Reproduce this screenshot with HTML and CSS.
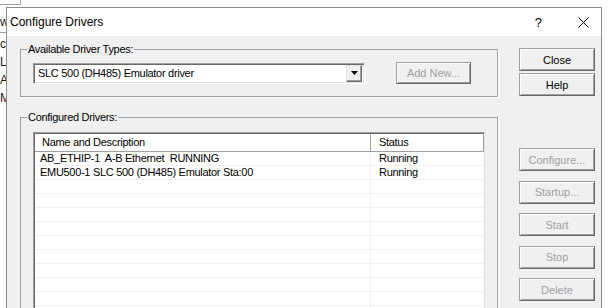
FILE: index.html
```html
<!DOCTYPE html>
<html lang="en">
<head>
  <meta charset="UTF-8">
  <title>Configure Drivers</title>
  <link rel="stylesheet" href="styles.css">
</head>
<body>

<div class="top">
  <div class="tab"></div>
</div>

<div class="screen">
  <div class="strip">
    <span class="s1">w:</span>
    <div class="rule"></div>
    <span>cs</span>
    <span>Li</span>
    <span>AE</span>
    <span>M</span>
  </div>

  <div class="dialog">
    <div class="titlebar">
      <span class="title">Configure Drivers</span>
      <span class="qmark">?</span>
      <svg class="xbtn" width="11" height="11" viewBox="0 0 11 11">
        <path d="M0.5 0.5 L10.5 10.5 M10.5 0.5 L0.5 10.5" stroke="#000" stroke-width="1" fill="none"/>
      </svg>
    </div>

    <div class="content">
      <div class="main">
        <fieldset class="group groupTypes">
          <legend>Available Driver Types:</legend>
          <div class="pick">
            <div class="combo">
              <span class="comboText">SLC 500 (DH485) Emulator driver</span>
              <div class="drop">
                <svg width="7" height="4" viewBox="0 0 7 4"><polygon points="0,0 7,0 3.5,4" fill="#000"/></svg>
              </div>
            </div>
            <div class="btn off addNew">Add New...</div>
          </div>
        </fieldset>

        <fieldset class="group groupConf">
          <legend>Configured Drivers:</legend>
          <div class="list">
            <div class="view">
              <div class="head">
                <div class="c1">Name and Description</div>
                <div class="c2">Status</div>
              </div>
              <div class="item"><div class="c1">AB_ETHIP-1  A-B Ethernet  RUNNING</div><div class="c2">Running</div></div>
              <div class="item"><div class="c1">EMU500-1 SLC 500 (DH485) Emulator Sta:00</div><div class="c2">Running</div></div>
              <div class="item"><div class="c1"></div><div class="c2"></div></div>
              <div class="item"><div class="c1"></div><div class="c2"></div></div>
              <div class="item"><div class="c1"></div><div class="c2"></div></div>
              <div class="item"><div class="c1"></div><div class="c2"></div></div>
              <div class="item"><div class="c1"></div><div class="c2"></div></div>
              <div class="item"><div class="c1"></div><div class="c2"></div></div>
              <div class="item"><div class="c1"></div><div class="c2"></div></div>
              <div class="item"><div class="c1"></div><div class="c2"></div></div>
              <div class="item"><div class="c1"></div><div class="c2"></div></div>
              <div class="item"><div class="c1"></div><div class="c2"></div></div>
            </div>
          </div>
        </fieldset>
      </div>

      <div class="side">
        <div class="btn">Close</div>
        <div class="btn help">Help</div>
        <div class="btn off configure">Configure...</div>
        <div class="btn off gapped">Startup...</div>
        <div class="btn off gapped">Start</div>
        <div class="btn off gapped">Stop</div>
        <div class="btn off gapped">Delete</div>
      </div>
    </div>
  </div>
</div>

</body>
</html>
```

FILE: styles.css
```css
* {
  margin: 0;
  padding: 0;
  box-sizing: border-box;
}

body {
  width: 609px;
  height: 308px;
  overflow: hidden;
  background: #fff;
  font-family: "Liberation Sans", Arial, sans-serif;
  font-size: 11px;
  letter-spacing: -0.3px;
  color: #000;
}

/* window behind the dialog */
.top {
  height: 7px;
}

.tab {
  width: 21px;
  height: 5px;
  border-right: 1px solid #a0a0a0;
  border-bottom: 1px solid #a0a0a0;
}

.screen {
  display: flex;
  height: 301px;
}

.strip {
  width: 6px;
  flex: none;
  overflow: hidden;
  padding-top: 6px;
  font-size: 12px;
  letter-spacing: 0;
  color: #1a1a1a;
}

.strip span {
  display: block;
  height: 18px;
  line-height: 18px;
  white-space: nowrap;
}

.strip .rule {
  height: 1px;
  margin: 1px 0 2px;
  background: #a0a0a0;
}

/* dialog */
.dialog {
  width: 596px;
  flex: none;
  display: flex;
  flex-direction: column;
  border: 1px solid #8c8c8c;
  border-bottom: 0;
  background: #f0f0f0;
}

.titlebar {
  height: 28px;
  flex: none;
  display: flex;
  align-items: center;
  padding: 0 12px 0 3px;
  background: #fff;
  font-size: 12px;
  letter-spacing: 0;
}

.title {
  flex: 1;
}

.qmark {
  font-size: 13px;
  margin-right: 36px;
}

.content {
  flex: 1;
  display: flex;
  gap: 21px;
  padding: 7px 0 0 13px;
  overflow: hidden;
}

.main {
  width: 478px;
  flex: none;
}

/* group boxes */
.group {
  border: 1px solid #a0a0a0;
  box-shadow: 1px 1px 0 #fff;
  min-width: 0;
}

.group legend {
  margin-left: -6px;
  padding: 0 1px;
  line-height: 13px;
}

.groupTypes {
  padding: 6px 12px 12px 12px;
}

.groupConf {
  margin-top: 14px;
  padding: 8px 12px 0 12px;
}

.pick {
  display: flex;
  align-items: center;
  gap: 31px;
  height: 22px;
}

.combo {
  width: 332px;
  height: 21px;
  display: flex;
  align-items: center;
  padding: 1px 2px 1px 4px;
  background: #fff;
  border: 1px solid;
  border-color: #a0a0a0 #fff #fff #a0a0a0;
  box-shadow: inset 1px 1px #696969, inset -1px -1px #e3e3e3;
}

.comboText {
  flex: 1;
}

.drop {
  width: 16px;
  height: 17px;
  display: flex;
  align-items: center;
  justify-content: center;
  background: #f0f0f0;
  border: 1px solid;
  border-color: #e3e3e3 #696969 #696969 #e3e3e3;
  box-shadow: inset -1px -1px #a0a0a0;
}

/* buttons */
.btn {
  width: 76px;
  height: 23px;
  display: flex;
  align-items: center;
  justify-content: center;
  background: #f0f0f0;
  border: 1px solid;
  border-color: #a0a0a0 #696969 #696969 #a0a0a0;
  box-shadow: inset 1px 1px #fff, inset -1px -1px #a0a0a0;
  letter-spacing: 0;
}

.btn.off {
  color: #a0a0a0;
}

.addNew {
  width: 75px;
  height: 22px;
}

.side {
  width: 76px;
  flex: none;
  display: flex;
  flex-direction: column;
  padding-top: 5px;
}

.help {
  margin-top: 2px;
}

.configure {
  margin-top: 52px;
}

.gapped {
  margin-top: 9.5px;
}

/* list view */
.list {
  height: 200px;
  background: #fff;
  border: 1px solid;
  border-color: #a0a0a0 #e3e3e3 #e3e3e3 #a0a0a0;
}

.view {
  height: 100%;
  border-top: 1px solid #696969;
  border-left: 1px solid #696969;
}

.head,
.item {
  display: flex;
}

.head {
  height: 18px;
  line-height: 17px;
  border-bottom: 1px solid #a0a0a0;
}

.head .c1 {
  width: 336px;
  padding-left: 7px;
  border-right: 1px solid #a0a0a0;
}

.head .c2 {
  flex: 1;
  padding-left: 8px;
  border-right: 1px solid #a0a0a0;
}

.item {
  height: 14px;
  line-height: 13px;
  border-bottom: 1px solid #f0f0f0;
}

.item .c1 {
  width: 336px;
  padding-left: 5px;
  white-space: pre;
  border-right: 1px solid #f0f0f0;
}

.item .c2 {
  flex: 1;
  padding-left: 8px;
}
```
